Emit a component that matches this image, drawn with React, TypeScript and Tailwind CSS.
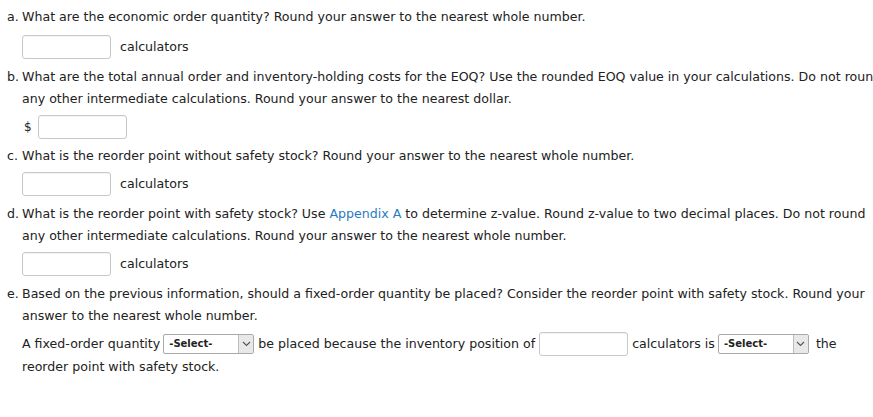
import React from "react";

function Blank({ w = "w-[89px]" }: { w?: string }) {
  return (
    <input
      type="text"
      className={`${w} h-[24px] rounded-[3px] border border-[#c8c8c8] bg-white outline-none align-middle shadow-[inset_0_1px_1px_rgba(0,0,0,0.05)]`}
    />
  );
}

function SelectBox() {
  return (
    <span className="inline-flex h-[20px] w-[91px] items-stretch overflow-hidden rounded-[2px] border border-[#a9a9a9] bg-white align-middle">
      <span className="flex flex-1 items-center pl-[5px] text-[10px] font-bold text-[#222]">-Select-</span>
      <span className="flex w-[15px] items-center justify-center border-l border-[#bdbdbd] bg-[#e8e8e8]">
        <svg width="9" height="6" viewBox="0 0 9 6">
          <path d="M1 1 L4.5 4.5 L8 1" fill="none" stroke="#555" strokeWidth="1.1" />
        </svg>
      </span>
    </span>
  );
}

function Part({ label, children }: { label: string; children: React.ReactNode }) {
  return (
    <div className="flex">
      <span className="w-[15px] shrink-0">{label}</span>
      <div className="whitespace-nowrap">{children}</div>
    </div>
  );
}

export default function App() {
  return (
    <div
      className="h-[417px] w-[873px] overflow-hidden bg-white pl-[7px] pt-[6px] text-[12.6px] leading-[22px] text-[#222]"
      style={{ fontFamily: "Verdana, 'DejaVu Sans', sans-serif" }}
    >
      <Part label="a.">What are the economic order quantity? Round your answer to the nearest whole number.</Part>
      <div className="mt-[7px] flex items-center gap-[9px] pl-[15px]">
        <Blank />
        <span>calculators</span>
      </div>

      <div className="mt-[7px]">
        <Part label="b.">
          What are the total annual order and inventory-holding costs for the EOQ? Use the rounded EOQ value in your calculations. Do not round
          <br />
          any other intermediate calculations. Round your answer to the nearest dollar.
        </Part>
      </div>
      <div className="mt-[5px] flex items-center gap-[6px] pl-[17px]">
        <span className="text-[12px]">$</span>
        <Blank />
      </div>

      <div className="mt-[6px]">
        <Part label="c.">What is the reorder point without safety stock? Round your answer to the nearest whole number.</Part>
      </div>
      <div className="mt-[5px] flex items-center gap-[9px] pl-[15px]">
        <Blank />
        <span>calculators</span>
      </div>

      <div className="mt-[7px]">
        <Part label="d.">
          What is the reorder point with safety stock? Use <span className="text-[#2b7bc0]">Appendix A</span> to determine z-value. Round z-value to two decimal places. Do not round
          <br />
          any other intermediate calculations. Round your answer to the nearest whole number.
        </Part>
      </div>
      <div className="mt-[5px] flex items-center gap-[9px] pl-[15px]">
        <Blank />
        <span>calculators</span>
      </div>

      <div className="mt-[7px]">
        <Part label="e.">
          Based on the previous information, should a fixed-order quantity be placed? Consider the reorder point with safety stock. Round your
          <br />
          answer to the nearest whole number.
        </Part>
      </div>
      <div className="mt-[5px] pl-[15px] leading-[22px]">
        <div className="flex h-[24px] items-center whitespace-nowrap">
          <span>A fixed-order quantity</span>
          <span className="ml-[3px] flex"><SelectBox /></span>
          <span className="ml-[4px]">be placed because the inventory position of</span>
          <span className="ml-[4px] flex"><Blank /></span>
          <span className="ml-[4px]">calculators is</span>
          <span className="ml-[3px] flex"><SelectBox /></span>
          <span className="ml-[7px]">the</span>
        </div>
        <div>reorder point with safety stock.</div>
      </div>
    </div>
  );
}
